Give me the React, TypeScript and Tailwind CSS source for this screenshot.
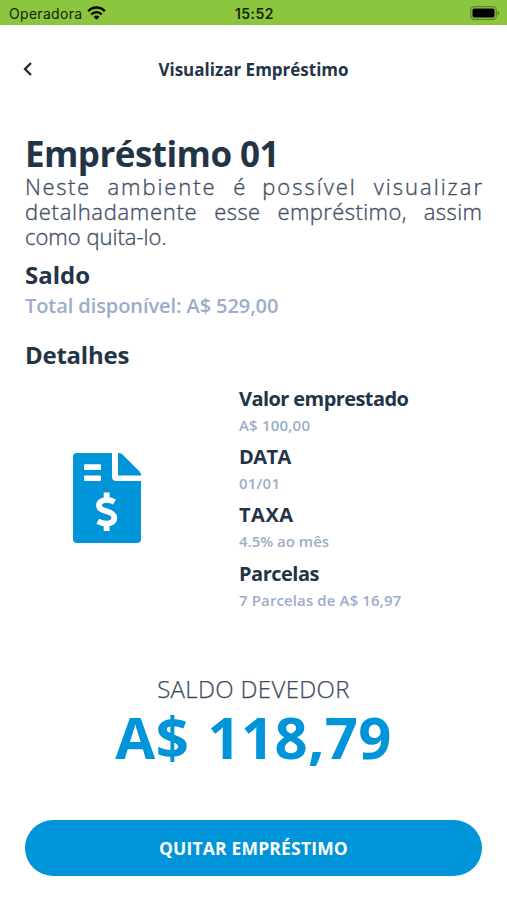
const details = [
  { title: "Valor emprestado", value: "A$ 100,00", titleClass: "tracking-[-0.58px]", valueClass: "tracking-[0.2px]" },
  { title: "DATA", value: "01/01", titleClass: "tracking-[-0.6px]", valueClass: "tracking-[0.2px]" },
  { title: "TAXA", value: "4.5% ao mês", titleClass: "tracking-[0.5px]", valueClass: "tracking-[0px]" },
  { title: "Parcelas", value: "7 Parcelas de A$ 16,97", titleClass: "tracking-[-0.5px]", valueClass: "tracking-[0.12px]" },
];

export default function App() {
  return (
    <div className="flex h-[900px] w-[507px] flex-col overflow-hidden bg-white font-['Open_Sans','Noto_Sans',sans-serif] text-[#243447]">
      <StatusBar />
      <Header />
      <main className="flex flex-1 flex-col px-[25px]">
        <h1 className="mt-[21px] mb-px h-[38px] whitespace-nowrap text-[35px] leading-[38px] font-bold tracking-[-0.55px]">
          Empréstimo 01
        </h1>
        <p className="text-[22px] leading-[25px] font-light whitespace-nowrap text-[#435066] [-webkit-text-stroke:0.35px_#435066]">
          <span className="flex justify-between">
            <span className="tracking-[1.6px]">Neste</span>{" "}
            <span className="tracking-[1.9px]">ambiente</span> <span>é</span>{" "}
            <span className="tracking-[2px]">possível</span>{" "}
            <span className="-mr-[2px] tracking-[2px]">visualizar</span>
          </span>
          <span className="flex justify-between tracking-[0.4px]">
            <span className="tracking-[0.7px]">detalhadamente</span> <span>esse</span>{" "}
            <span>empréstimo,</span> <span className="-mr-[0.4px]">assim</span>
          </span>
          <span className="block">como quita-lo.</span>
        </p>
        <h2 className="mt-[11px] text-[24px] leading-[30px] font-bold">
          <span>Saldo</span>
        </h2>
        <p className="mt-[3px] text-[20px] leading-[26px] font-semibold tracking-[-0.08px] whitespace-nowrap text-[#9badc8]">
          <span>Total disponível: A$ 529,00</span>
        </p>
        <h2 className="mt-[21px] text-[24px] leading-[30px] font-bold tracking-[-0.25px]">
          <span>Detalhes</span>
        </h2>
        <section className="mt-[14px] flex h-[232px]">
          <div className="flex w-[214px] justify-center pt-[69px] pr-[50px]">
            <InvoiceIcon />
          </div>
          <ul>
            {details.map((item) => (
              <li key={item.title} className="h-[58.2px] whitespace-nowrap">
                <h3 className="text-[20px] leading-[30px] font-bold">
                  <span className={item.titleClass}>{item.title}</span>
                </h3>
                <p className="text-[15px] leading-[22px] font-semibold text-[#9badc8]">
                  <span className={item.valueClass}>{item.value}</span>
                </p>
              </li>
            ))}
          </ul>
        </section>
        <section className="mt-[58px] text-center whitespace-nowrap">
          <p className="text-[24px] leading-[30px] font-light text-[#3d4a5f] [-webkit-text-stroke:0.25px_#3d4a5f]">
            <span className="tracking-[0.35px]">SALDO DEVEDOR</span>
          </p>
          <p className="text-[58px] leading-[66px] font-bold text-[#0094d8]">
            <span className="tracking-[0.3px] [word-spacing:3px]">A$ 118,79</span>
          </p>
        </section>
        <button className="mt-[50px] h-[56px] w-full shrink-0 rounded-full bg-[#0094d8] text-[17.5px] font-bold text-white">
          <span className="tracking-[0.18px]">QUITAR EMPRÉSTIMO</span>
        </button>
      </main>
    </div>
  );
}

const StatusBar = () => {
  return (
    <div className="grid h-[25px] grid-cols-3 items-center bg-[#8cc63f] pt-[2px] pr-[7px] pl-[9px] font-['Inter','Liberation_Sans',sans-serif] text-[14px] text-[#16240c]">
      <div className="flex items-center gap-[5px]">
        <span className="tracking-[0.3px]">Operadora</span>
        <WifiIcon />
      </div>
      <span className="text-center font-semibold tracking-[0.5px]">15:52</span>
      <div className="flex justify-end pb-px">
        <BatteryIcon />
      </div>
    </div>
  );
};

const Header = () => {
  return (
    <header className="grid h-[89px] grid-cols-[52px_1fr_52px] items-center">
      <button className="pb-px pl-[21px]" aria-label="Voltar">
        <ChevronIcon />
      </button>
      <h1 className="text-center text-[17px] font-bold whitespace-nowrap">
        <span>Visualizar Empréstimo</span>
      </h1>
    </header>
  );
};

const ChevronIcon = () => {
  return (
    <svg width="12" height="16" viewBox="0 0 12 16" fill="none" stroke="#1f2933" strokeWidth="2.3">
      <path d="M10 2 4 8 10 14" />
    </svg>
  );
};

const WifiIcon = () => {
  return (
    <svg className="mb-[2px]" width="19" height="14" viewBox="0 0 19 14" fill="none" stroke="#000" strokeWidth="2.4">
      <path d="M1.2 5.2C5.8.3 13.2.3 17.8 5.2" />
      <path d="M4.3 8.4C7.2 5.3 11.8 5.3 14.7 8.4" />
      <path d="M9.5 13.700 6.600 10.700C8.200 9.200 10.800 9.200 12.400 10.700Z" fill="#000" stroke="none" />
    </svg>
  );
};

const BatteryIcon = () => {
  return (
    <svg width="30" height="14" viewBox="0 0 30 14">
      <rect x=".7" y=".7" width="25.6" height="12.6" rx="3.6" fill="none" stroke="#5b8428" strokeWidth="1.2" />
      <rect x="2.5" y="2.5" width="22" height="9" rx="1.8" fill="#000" />
      <path d="M27.6 4.7C29.8 5.4 29.8 8.6 27.6 9.3Z" fill="#5b8428" />
    </svg>
  );
};

const InvoiceIcon = () => {
  return (
    <svg width="68" height="90" viewBox="0 0 68 90">
      <path
        fill="#0094d8"
        fillRule="evenodd"
        d="M4 0H39V23.500Q39 28 43.500 28H68V86Q68 90 64 90H4Q0 90 0 86V4Q0 0 4 0ZM12 11.300Q11 11.300 11 12.300V16Q11 17 12 17H27Q28 17 28 16V12.300Q28 11.300 27 11.300ZM12 22.500Q11 22.500 11 23.500V27Q11 28 12 28H27Q28 28 28 27V23.500Q28 22.500 27 22.500Z"
      />
      <path fill="#0094d8" d="M45 0H46Q48 0 49.500 1.500L66.500 18.500Q68 20 68 21.500V22.500H45Z" />
      <path
        d="M41.500 49C38.500 47.400 36 46.800 33.500 46.900C29 47.100 26 49.300 26 52.400C26 55.800 29 57 33.500 58.300C38.500 59.800 41.300 61.300 41.300 64.700C41.300 68.500 38 70.600 33.500 70.600C30 70.600 27.500 69.700 24.800 68.200M33.600 39.500V47M33.600 70V78"
        fill="none"
        stroke="#fff"
        strokeWidth="5.800"
      />
    </svg>
  );
};
